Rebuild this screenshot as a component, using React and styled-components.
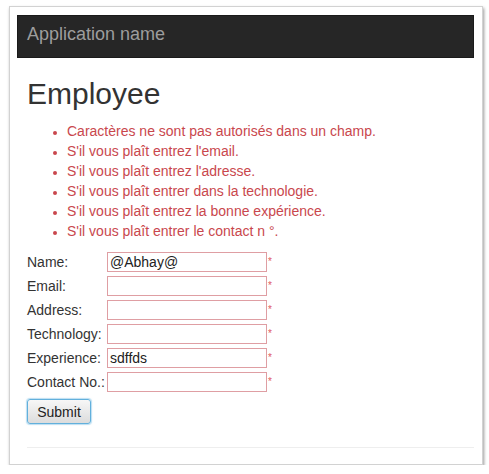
import React from 'react'
import styled, { createGlobalStyle } from 'styled-components'

const errors = [
  'Caractères ne sont pas autorisés dans un champ.',
  "S'il vous plaît entrez l'email.",
  "S'il vous plaît entrez l'adresse.",
  "S'il vous plaît entrer dans la technologie.",
  "S'il vous plaît entrez la bonne expérience.",
  "S'il vous plaît entrer le contact n °."
]

const fields = [
  { label: 'Name:', value: '@Abhay@' },
  { label: 'Email:', value: '' },
  { label: 'Address:', value: '' },
  { label: 'Technology:', value: '' },
  { label: 'Experience:', value: 'sdffds' },
  { label: 'Contact No.:', value: '' }
]

const App = () => {
  return (
    <>
      <GlobalStyle />
      <Card>
        <NavBar>
          <Brand>Application name</Brand>
        </NavBar>
        <Container>
          <Title>Employee</Title>
          <ErrorList>
            {errors.map(e => (
              <li key={e}>{e}</li>
            ))}
          </ErrorList>
          <Form onSubmit={e => e.preventDefault()}>
            {fields.map(f => (
              <Row key={f.label}>
                <Label>{f.label}</Label>
                <Input defaultValue={f.value} />
                <Required>*</Required>
              </Row>
            ))}
            <SubmitButton type="submit">Submit</SubmitButton>
          </Form>
          <Rule />
        </Container>
      </Card>
    </>
  )
}

const GlobalStyle = createGlobalStyle`
  html, body {
    margin: 0;
    background: #fff;
    font-family: "Liberation Sans", Arial, sans-serif;
  }
`

const Card = styled.div`
  box-sizing: border-box;
  margin: 6px 0 0 9px;
  width: 474px;
  height: 459px;
  padding: 8px 8px 0 7px;
  background: #fff;
  border: 1px solid #d2d2d2;
  box-shadow: 1px 2px 3px rgba(0, 0, 0, 0.4);
`

const NavBar = styled.div`
  height: 43px;
  background: #262626;
  border: 1px solid #1a1a1a;
  box-sizing: border-box;
  display: flex;
  align-items: center;
  padding: 0 0 5px 9px;
`

const Brand = styled.span`
  color: #9d9d9d;
  font-size: 18px;
`

const Container = styled.div`
  padding: 0 0 0 10px;
`

const Title = styled.h1`
  margin: 19px 0 10px;
  font-size: 30px;
  font-weight: normal;
  color: #333;
  line-height: 34px;
`

const ErrorList = styled.ul`
  margin: 0 0 11px;
  padding-left: 40px;
  color: #c9474d;
  font-size: 14px;
  line-height: 20px;
  list-style: disc;

  li::marker {
    font-size: 12px;
  }
`

const Form = styled.form`
  display: flex;
  flex-direction: column;
  align-items: flex-start;
  gap: 4px;
`

const Row = styled.div`
  display: flex;
  align-items: center;
  height: 20px;
`

const Label = styled.label`
  width: 80px;
  font-size: 14px;
  color: #333;
  white-space: nowrap;
`

const Input = styled.input`
  box-sizing: border-box;
  width: 160px;
  height: 20px;
  margin: 0;
  padding: 0 2px;
  border: 1px solid #df9ea3;
  font-family: "Liberation Sans", Arial, sans-serif;
  font-size: 14px;
  color: #222;
  outline: none;
`

const Required = styled.span`
  color: #e05a60;
  font-size: 10px;
  line-height: 10px;
  margin-left: 1px;
`

const SubmitButton = styled.button`
  margin-top: 3px;
  width: 64px;
  height: 25px;
  border: 1px solid #62b0dc;
  border-radius: 3px;
  background: linear-gradient(#f7f7f7, #dcdcdc);
  box-shadow: 0 0 1px 1px rgba(120, 190, 230, 0.5);
  font-family: "Liberation Sans", Arial, sans-serif;
  font-size: 14px;
  color: #222;
  padding: 0;
`

const Rule = styled.hr`
  margin: 23px 0 0;
  border: 0;
  border-top: 1px solid #eee;
`

export default App
